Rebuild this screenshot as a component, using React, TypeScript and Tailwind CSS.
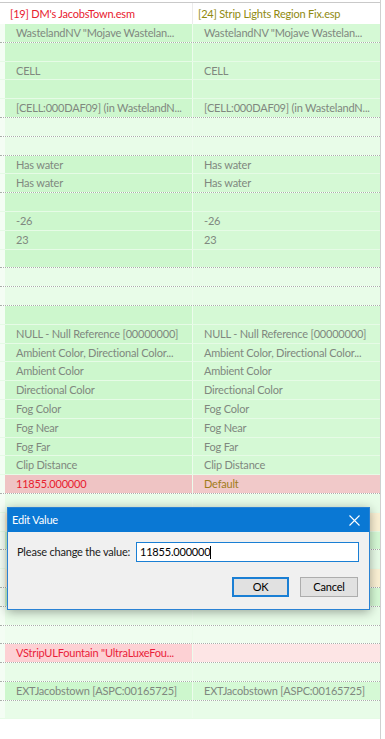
import React from 'react';

type Row = {
  l?: string;
  r?: string;
  bl: string;
  br: string;
  dot?: boolean;
  tl?: string;
  tr?: string;
};

const G = 'bg-[#cdf7cd]';
const G2 = 'bg-[#d5f9d5]';
const L = 'bg-[#e8fce8]';
const Y = 'bg-[#fbf1d4]';

const rows: Row[] = [
  { l: 'WastelandNV "Mojave Wastelan...', r: 'WastelandNV "Mojave Wastelan...', bl: G, br: G2, dot: true },
  { bl: G, br: G2 },
  { l: 'CELL', r: 'CELL', bl: G, br: G2 },
  { bl: G, br: G2 },
  { l: '[CELL:000DAF09] (in WastelandN...', r: '[CELL:000DAF09] (in WastelandN...', bl: G, br: G2, dot: true },
  { bl: L, br: L, dot: true },
  { bl: L, br: L, dot: true },
  { l: 'Has water', r: 'Has water', bl: G, br: G2 },
  { l: 'Has water', r: 'Has water', bl: G, br: G2, dot: true },
  { bl: G, br: G2 },
  { l: '-26', r: '-26', bl: G, br: G2 },
  { l: '23', r: '23', bl: G, br: G2 },
  { bl: G, br: G2, dot: true },
  { bl: L, br: L, dot: true },
  { bl: L, br: L, dot: true },
  { bl: G, br: G2 },
  { l: 'NULL - Null Reference [00000000]', r: 'NULL - Null Reference [00000000]', bl: G, br: G2 },
  { l: 'Ambient Color, Directional Color...', r: 'Ambient Color, Directional Color...', bl: G, br: G2 },
  { l: 'Ambient Color', r: 'Ambient Color', bl: G, br: G2 },
  { l: 'Directional Color', r: 'Directional Color', bl: G, br: G2 },
  { l: 'Fog Color', r: 'Fog Color', bl: G, br: G2 },
  { l: 'Fog Near', r: 'Fog Near', bl: G, br: G2 },
  { l: 'Fog Far', r: 'Fog Far', bl: G, br: G2 },
  { l: 'Clip Distance', r: 'Clip Distance', bl: G, br: G2 },
  { l: '11855.000000', r: 'Default', bl: 'bg-[#efc4c4]', br: 'bg-[#f1c9c9]', dot: true, tl: 'text-[#e8202e]', tr: 'text-[#a07c1a]' },
  { bl: L, br: L },
  { bl: Y, br: Y },
  { l: 'Fog Power, Fog Max, Light Fa...', r: 'Fog Power, Fog Max, Light Fad...', bl: G, br: G2, dot: true },
  { bl: L, br: L },
  { l: 'Directional Fade, Fog Clip Dis...', r: 'Directional Fade, Fog Clip Dist...', bl: Y, br: Y, dot: true },
  { bl: G, br: G2, dot: true },
  { bl: L, br: L, dot: true },
  { bl: 'bg-[#effdef]', br: 'bg-[#effdef]', dot: true },
  { l: 'VStripULFountain "UltraLuxeFou...', bl: 'bg-[#fdd1d4]', br: 'bg-[#fde5e5]', dot: true, tl: 'text-[#ea1d3a]' },
  { bl: L, br: L, dot: true },
  { l: 'EXTJacobstown [ASPC:00165725]', r: 'EXTJacobstown [ASPC:00165725]', bl: G, br: G2, dot: true },
  { bl: L, br: L },
];

function GridRow({ row }: { row: Row }) {
  const border = row.dot ? 'border-b border-dotted border-[#a9b0a9]' : 'border-b border-[#e6fbe6]';
  return (
    <div className={`flex h-[18.8px] ${border}`}>
      <div className="w-[5px] bg-[#f4fdf4]" />
      <div className={`w-[187px] pl-[11px] leading-[17.8px] whitespace-nowrap overflow-hidden ${row.bl} ${row.tl ?? 'text-[#80887f]'}`}>
        {row.l}
      </div>
      <div className="w-px bg-[#ecfcec]" />
      <div className={`flex-1 pl-[11px] leading-[17.8px] whitespace-nowrap overflow-hidden ${row.br} ${row.tr ?? 'text-[#80887f]'}`}>
        {row.r}
      </div>
    </div>
  );
}

function EditDialog() {
  return (
    <div className="absolute left-[7px] top-[507px] w-[363px] h-[103px] border border-[#2a82d4] bg-[#f0f0f0] shadow-[0_2px_10px_rgba(0,0,0,0.35)] flex flex-col">
      <div className="h-[24px] bg-[#0a78d4] flex items-center justify-between pl-[4px] pr-[9px] text-white">
        <span>Edit Value</span>
        <svg width="11" height="11" viewBox="0 0 11 11" className="stroke-white" strokeWidth="1.1">
          <path d="M0.5 0.5 L10.5 10.5 M10.5 0.5 L0.5 10.5" fill="none" />
        </svg>
      </div>
      <div className="flex items-center pl-[9px] pt-[10px]">
        <span className="w-[119px] shrink-0 text-[#1a1a1a] whitespace-nowrap">Please change the value:</span>
        <div className="w-[223px] h-[20px] shrink-0 bg-white border border-[#1a7fd4] flex items-center pl-[3px] text-black">
          11855.000000
          <span className="w-px h-[13px] bg-black" />
        </div>
      </div>
      <div className="flex justify-end gap-[11px] pr-[11px] pt-[15px]">
        <button className="w-[57px] h-[20px] bg-[#e1e1e1] border-2 border-[#1a7fd4] text-black flex items-center justify-center">OK</button>
        <button className="w-[58px] h-[20px] bg-[#e1e1e1] border border-[#adadad] text-black flex items-center justify-center">Cancel</button>
      </div>
    </div>
  );
}

export default function App() {
  return (
    <div className="relative w-[385px] h-[739px] overflow-hidden bg-white text-[11px] tracking-[-0.2px] leading-[16px] font-['Lato',sans-serif]">
      <div className="w-[381px] h-full border-r border-[#d0d0d0] pt-[2px]">
        <div className="flex h-[22px] border-t border-[#c9c9c9] bg-white">
          <div className="w-[192px] pl-[10px] leading-[21px] text-[#e8202e] whitespace-nowrap overflow-hidden">[19] DM's JacobsTown.esm</div>
          <div className="w-px bg-[#ececec]" />
          <div className="flex-1 pl-[5px] leading-[21px] text-[#8f8a10] whitespace-nowrap overflow-hidden">[24] Strip Lights Region Fix.esp</div>
        </div>
        {rows.map((row, i) => (
          <GridRow key={i} row={row} />
        ))}
      </div>
      <EditDialog />
    </div>
  );
}
